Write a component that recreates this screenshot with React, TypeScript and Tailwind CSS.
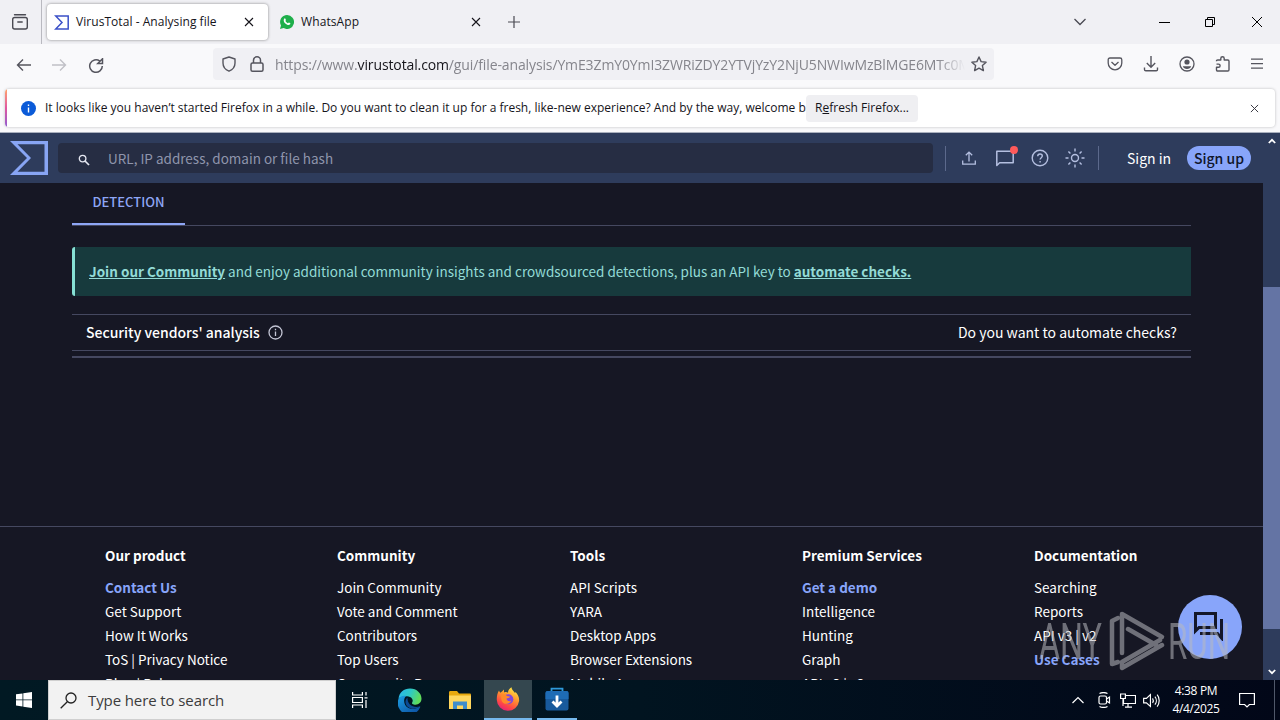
import React from "react";

type IconProps = { className?: string; children: React.ReactNode; box?: number; sw?: number };

function Icon({ className = "", children, box = 16, sw = 1.2 }: IconProps) {
  return (
    <svg
      viewBox={`0 0 ${box} ${box}`}
      fill="none"
      stroke="currentColor"
      strokeWidth={sw}
      className={`shrink-0 ${className}`}
    >
      {children}
    </svg>
  );
}

function Cross({ className = "" }: { className?: string }) {
  return (
    <Icon box={10} sw={1.1} className={className}>
      <path d="M1 1l8 8M9 1l-8 8" />
    </Icon>
  );
}

function TabBar() {
  return (
    <div className="flex h-11 items-center bg-[#f0f0f4]">
      <div className="flex h-full w-[42px] items-center border-r border-[#b9b9c0] pl-[11px] text-[#4a4a52]">
        <Icon className="h-[18px] w-[18px]" box={18} sw={1.4}>
          <path d="M3.5 1.7h11" strokeLinecap="round" />
          <path d="M1.7 6.5c0-1.300.7-2 2-2h10.600c1.300 0 2 .7 2 2v7.500c0 1.300-.7 2-2 2H3.700c-1.300 0-2-.7-2-2zM6.800 9h4.400" strokeLinecap="round" />
        </Icon>
      </div>
      <div className="ml-[5px] flex h-9 w-[221px] items-center rounded bg-white shadow-[0_0_3px_rgba(0,0,0,0.45)]">
        <svg viewBox="0 0 15 15" className="ml-[7px] h-[15px] w-[15px]" fill="none" stroke="#3b50c8" strokeWidth="1.500">
          <path d="M1.700 1h12.500v13H1.700L8 7.500z" />
        </svg>
        <span className="ml-[7px] w-[160px] text-[12px] whitespace-nowrap tracking-[0.05px] text-[#15141a]">VirusTotal - Analysing file</span>
        <Cross className="ml-[8px] h-[10px] w-[10px] text-[#15141a]" />
      </div>
      <svg viewBox="0 0 14 14" className="ml-3 h-[14px] w-[14px]">
        <path d="M7 0a7 7 0 1 1-3.400 13.100L0 14l1-3.500A7 7 0 0 1 7 0z" fill="#1faf4b" />
        <path d="M4.500 3.400c.5-.3.8 0 1 .6l.4 1c.1.4-.5.8-.5 1 .5 1 1.300 1.700 2.400 2.200.3 0 .6-.8 1-.8l1.300.7c.5.3.2 1.100-.3 1.500-1 .9-2.700.2-4.100-.9C4 7.400 2.900 4.900 4.500 3.400z" fill="#fff" />
      </svg>
      <span className="ml-[7px] w-[160px] text-[12px] tracking-[0.1px] text-[#15141a]">WhatsApp</span>
      <Cross className="ml-[10px] h-[10px] w-[10px] text-[#15141a]" />
      <Icon className="ml-[27px] h-3 w-3 text-[#4a4a52]" box={12} sw={1.2}>
        <path d="M6 0v12M0 6h12" />
      </Icon>
      <div className="ml-auto flex items-center pr-[18px] text-black">
        <Icon className="mr-[73px] h-3 w-3 text-[#4a4a52]" box={12} sw={1.3}>
          <path d="M.5 3L6 8.500 11.500 3" />
        </Icon>
        <Icon className="mr-[35px] h-[11px] w-[11px]" box={11} sw={1}>
          <path d="M0 5.500h11" />
        </Icon>
        <Icon className="mr-[36px] h-[11px] w-[11px]" box={11} sw={1}>
          <path d="M.5 2.500h7v7h-7zM2.500 2.500v-2h7v7h-2" />
        </Icon>
        <Icon className="h-[10px] w-[10px]" box={10} sw={1}>
          <path d="M0 0l10 10M10 0L0 10" />
        </Icon>
      </div>
    </div>
  );
}

function NavBar() {
  return (
    <div className="flex h-11 items-center bg-[#f9f9fb] pr-[17px] pl-[16px] text-[#55555e]">
      <Icon className="h-4 w-4" sw={1.4}>
        <path d="M15 7H1.500M7 1.500L1.500 7 7 12.500" />
      </Icon>
      <Icon className="ml-[19px] h-4 w-4 text-[#c0c0c6]" sw={1.4}>
        <path d="M1 7h13.500M9 1.500L14.500 7 9 12.500" />
      </Icon>
      <Icon className="ml-[21px] h-4 w-4" sw={1.5}>
        <path d="M14.300 8A6.300 6.300 0 1 1 11.800 3M14.500.800v4.700H9.800z" />
      </Icon>
      <div className="-mt-1 ml-[109px] flex h-8 w-[781px] items-center self-center rounded bg-[#f0f0f4]">
        <Icon className="ml-2 h-4 w-4" sw={1.4}>
          <path d="M8 1l6 2v4c0 4-2.500 6.800-6 8.200C4.500 13.800 2 11 2 7V3z" strokeLinejoin="round" />
        </Icon>
        <Icon className="ml-3 h-4 w-4" sw={1.5}>
          <rect x="2" y="7" width="12" height="8.200" rx="1.500" />
          <path d="M4.500 7V4.300a3.500 3.500 0 0 1 7 0V7" />
        </Icon>
        <div className="ml-[10px] w-[690px] overflow-hidden text-[14px] whitespace-nowrap text-[#85858c] [mask-image:linear-gradient(to_right,black_96%,transparent)]">
          <span className="tracking-[-0.12px]">https://www.</span>
          <span className="tracking-[-0.12px] text-[#15141a]">virustotal.com</span>
          <span className="tracking-[-0.12px]">/gui/file-analysis/YmE3ZmY0YmI3ZWRiZDY2YTVjYzY2NjU5NWIwMzBlMGE6MTc0Mzc4</span>
        </div>
        <Icon className="ml-[6px] h-4 w-4" sw={1.4}>
          <path d="M8 1l2.100 4.600 5 .6-3.700 3.400 1 5L8 12.100l-4.400 2.500 1-5L.900 6.200l5-.6z" strokeLinejoin="round" />
        </Icon>
      </div>
      <div className="-mt-1 ml-auto flex items-center">
        <Icon className="mr-[20px] h-4 w-4" sw={1.3}>
          <path d="M3 2h10c1.200 0 1.800.7 1.800 1.800V7a6.800 6.800 0 0 1-13.600 0V3.800C1.200 2.700 1.800 2 3 2zM4.500 6L8 9.200 11.500 6" strokeLinejoin="round" />
        </Icon>
        <Icon className="mr-[20px] h-4 w-4" sw={1.4}>
          <path d="M8 0v11M3.800 7L8 11.200 12.200 7M1.500 11.500v2c0 .8.500 1.300 1.300 1.300h10.400c.8 0 1.300-.5 1.300-1.300v-2" />
        </Icon>
        <Icon className="mr-[20px] h-4 w-4" sw={1.3}>
          <circle cx="8" cy="8" r="7" />
          <circle cx="8" cy="6" r="2.600" fill="currentColor" stroke="none" />
          <path d="M3.800 10.300h8.400c-.6 1.800-2.200 2.700-4.200 2.700s-3.600-.9-4.200-2.700z" fill="currentColor" stroke="none" />
        </Icon>
        <Icon className="mr-[20px] h-4 w-4" sw={1.4}>
          <path d="M1.500 5.200c0-.8.400-1.200 1.200-1.200h3.100V2.400a1.700 1.700 0 0 1 3.400 0V4h3.600c.8 0 1.200.4 1.200 1.200v8.600c0 .8-.4 1.200-1.200 1.200H2.700c-.8 0-1.200-.4-1.200-1.200v-2.500h2a1.600 1.600 0 0 0 0-3.200h-2" strokeLinejoin="round" />
        </Icon>
        <Icon className="h-3 w-3" box={12} sw={1.3}>
          <path d="M0 1.200h12M0 5.700h12M0 10.200h12" />
        </Icon>
      </div>
    </div>
  );
}

function Notice() {
  return (
    <div className="flex h-[45px] items-start border-b border-[#aab0be] bg-[#f9f9fb] px-[5px] pt-px">
      <div className="flex h-[38px] w-full items-center overflow-hidden rounded bg-white shadow-[0_0_3px_rgba(0,0,0,0.25)]">
        <div className="h-full w-[2px] bg-linear-to-b from-[#ffa266] via-[#e0559f] to-[#9059cf]" />
        <svg viewBox="0 0 15 15" className="ml-[14px] h-[15px] w-[15px]">
          <circle cx="7.500" cy="7.500" r="7.500" fill="#0b5bd8" />
          <path d="M7.500 6.500v5M7.500 3.500v1.600" stroke="#fff" strokeWidth="1.400" />
        </svg>
        <span className="ml-[9px] w-[761px] text-[12px] whitespace-nowrap text-[#15141a]">
          It looks like you haven’t started Firefox in a while. Do you want to clean it up for a fresh, like-new experience? And by the way, welcome back!
        </span>
        <button className="flex h-[27px] w-[112px] items-center justify-center rounded bg-[#efeff2] text-[12px] whitespace-nowrap text-[#15141a]">
          R<span className="underline">e</span>fresh Firefox...
        </button>
        <Cross className="mr-[16px] ml-auto h-[9px] w-[9px] text-[#3a3a42]" />
      </div>
    </div>
  );
}

function SiteHeader() {
  return (
    <header className="flex h-[50px] items-center bg-[#2e3c5c] pl-[10px] text-[#b4bfe0]">
      <svg viewBox="0 0 38 34" className="h-[34px] w-[38px]">
        <path d="M0 0h38v34H0l17-17zM7.500 3.300L21 17 7.500 30.700h27V3.300z" fill="#88a5f4" fillRule="evenodd" />
      </svg>
      <div className="ml-[10px] flex h-[30px] w-[875px] items-center rounded bg-[#262d43]">
        <Icon className="ml-[20px] mt-[3px] h-3 w-3 text-[#e4e6f0]" box={12} sw={1.3}>
          <circle cx="4.600" cy="4.600" r="3.300" />
          <path d="M7 7l4 4" strokeWidth="1.700" />
        </Icon>
        <span className="ml-[18px] text-[13.5px] text-[#8f95ac]">URL, IP address, domain or file hash</span>
      </div>
      <div className="ml-3 h-[25px] w-px bg-[#5c698c]" />
      <Icon className="ml-[16px] h-[14px] w-[14px]" box={14} sw={1.3}>
        <path d="M7 10.500V1.200M3.800 4.300L7 1.100l3.200 3.200M.700 9.500v3.700h12.600V9.500" />
      </Icon>
      <div className="relative ml-[20px] h-[18px] w-[18px]">
        <Icon className="h-[18px] w-[18px]" box={18} sw={1.5}>
          <path d="M.800 16.500V2.300h16.400v11.400H3.600z" strokeLinejoin="round" />
        </Icon>
        <span className="absolute -top-[3px] left-[14px] h-[8px] w-[8px] rounded-full bg-[#ff5a5a]" />
      </div>
      <Icon className="ml-[17px] h-[18px] w-[18px]" box={18} sw={1.4}>
        <circle cx="9" cy="9" r="7.800" />
        <path d="M6.700 7.300c0-1.400 1-2.300 2.300-2.300s2.300.9 2.300 2.100c0 1.600-2.200 1.700-2.200 3.500M9.100 12v1.500" />
      </Icon>
      <Icon className="ml-[16px] h-5 w-5" box={20} sw={1.4}>
        <circle cx="10" cy="10" r="3.500" />
        <path d="M10 .500v3M10 16.500v3M.500 10h3M16.500 10h3M3.400 3.400l2 2M14.600 14.600l2 2M3.400 16.600l2-2M14.600 5.400l2-2" />
      </Icon>
      <div className="ml-[13px] h-6 w-px bg-[#5c698c]" />
      <span className="ml-[28px] w-[60px] text-[14px] whitespace-nowrap text-white">Sign in</span>
      <span className="flex h-6 w-16 items-center justify-center rounded-full bg-[#88a5fa] text-[14px] font-medium whitespace-nowrap text-[#10162c]">Sign up</span>
    </header>
  );
}

type Column = { title: string; left: string; links: { text: string; accent?: boolean }[] };

const columns: Column[] = [
  { title: "Our product", left: "w-[232px]", links: [{ text: "Contact Us", accent: true }, { text: "Get Support" }, { text: "How It Works" }, { text: "ToS | Privacy Notice" }, { text: "Blog | Releases" }] },
  { title: "Community", left: "w-[233px]", links: [{ text: "Join Community" }, { text: "Vote and Comment" }, { text: "Contributors" }, { text: "Top Users" }, { text: "Community Buzz" }] },
  { title: "Tools", left: "w-[232px]", links: [{ text: "API Scripts" }, { text: "YARA" }, { text: "Desktop Apps" }, { text: "Browser Extensions" }, { text: "Mobile App" }] },
  { title: "Premium Services", left: "w-[232px]", links: [{ text: "Get a demo", accent: true }, { text: "Intelligence" }, { text: "Hunting" }, { text: "Graph" }, { text: "API v3 | v2" }] },
  { title: "Documentation", left: "w-[200px]", links: [{ text: "Searching" }, { text: "Reports" }, { text: "API v3 | v2" }, { text: "Use Cases", accent: true }] },
];

function Page() {
  return (
    <div className="flex min-w-0 flex-1 flex-col bg-[#161724] text-white">
      <SiteHeader />
      <main className="flex h-[343px] flex-col pr-[72px] pl-[72px]">
        <div className="flex h-[43px] border-b border-[#454860]">
          <div className="flex h-[42px] w-[113px] items-start justify-center border-b-2 border-[#8ea6f5] pt-[7px] text-[13px] leading-[24px] font-medium text-[#8ea6f5]">DETECTION</div>
        </div>
        <div className="mt-[21px] flex h-[49px] items-center rounded-l-[3px] border-l-[3px] border-[#86e0d4] bg-[#173a3d] pl-[14px] text-[13.5px] whitespace-pre text-[#93dbd6]">
          <b className="underline">Join our Community</b>
          <span> and enjoy additional community insights and crowdsourced detections, plus an API key to </span>
          <b className="underline">automate checks.</b>
        </div>
        <div className="mt-[18px] flex h-[37px] items-center border-y border-[#454860] px-[14px] text-[14px]">
          <span className="font-medium">Security vendors' analysis</span>
          <Icon className="ml-[8px] h-[15px] w-[15px] text-[#c3c5d4]" box={15} sw={1.3}>
            <circle cx="7.500" cy="7.500" r="6.500" />
            <path d="M7.500 6.500v4.500M7.500 3.800v1.500" />
          </Icon>
          <span className="ml-auto">Do you want to automate checks?</span>
        </div>
        <div className="mt-[5px] h-[2px] bg-[#454860]" />
      </main>
      <footer className="flex h-[154px] overflow-hidden border-t border-[#454860] pt-[16px] pl-[105px] text-[13.5px] leading-[24px] whitespace-nowrap">
        {columns.map((c) => (
          <div key={c.title} className={`shrink-0 ${c.left}`}>
            <div className="mb-2 font-bold">{c.title}</div>
            {c.links.map((l) => (
              <div key={l.text} className={l.accent ? "font-bold text-[#88a5fa]" : ""}>{l.text}</div>
            ))}
          </div>
        ))}
      </footer>
    </div>
  );
}

function ScrollBar() {
  return (
    <div className="flex w-[17px] flex-col items-center bg-[#2e3c5c] text-white">
      <Icon className="mt-[4px] h-[8px] w-[10px]" box={10} sw={2.2}>
        <path d="M1 7.500l4-4 4 4" />
      </Icon>
      <div className="mt-[142px] h-[342px] w-full bg-[#6474a4]" />
      <Icon className="mt-[39px] h-[8px] w-[10px]" box={10} sw={2.2}>
        <path d="M1 2.500l4 4 4-4" />
      </Icon>
    </div>
  );
}

function ChatButton() {
  return (
    <div className="absolute top-[595px] left-[1178px] flex h-16 w-16 items-center justify-center rounded-full bg-[#88a5fa]">
      <svg viewBox="0 0 32 30" className="-mt-[2px] -ml-[2px] h-[30px] w-8" fill="none" stroke="#141728" strokeWidth="3">
        <path d="M2.500 2.500h20v14H6l-3.500 3.500z" />
        <path d="M28.500 8v19l-4-4.500H7" />
      </svg>
    </div>
  );
}

function Watermark() {
  return (
    <svg viewBox="0 0 200 70" className="absolute top-[605px] left-[1036px] h-[70px] w-[200px] opacity-55" fill="#b9babf">
      <text x="3" y="54" fontFamily="Roboto" fontSize="50" textLength="63" lengthAdjust="spacingAndGlyphs">ANY</text>
      <text x="132" y="54" fontFamily="Roboto" fontSize="50" textLength="62" lengthAdjust="spacingAndGlyphs">RUN</text>
      <g fill="none" stroke="#b9babf" strokeWidth="4.500" strokeLinecap="round" strokeLinejoin="round">
        <path d="M82 13l-6 3v43l6-2" />
        <path d="M86 48V9l40 23" />
        <path d="M92 24l28 16M126 40L86 63v-6l38-22" />
      </g>
    </svg>
  );
}

function Taskbar() {
  return (
    <div className="flex h-10 items-center bg-linear-to-r from-[#011923] via-[#011420] to-[#020718] text-white">
      <div className="flex w-12 justify-center">
        <svg viewBox="0 0 16 16" className="h-4 w-4" fill="#fff">
          <path d="M0 2.300L6.500 1.400v6.100H0zM7.300 1.300L16 0v7.500H7.300zM0 8.300h6.500v6.200L0 13.600zM7.300 8.300H16V16l-8.700-1.300z" />
        </svg>
      </div>
      <div className="flex h-full w-[288px] items-center border border-[#cfcfcf] bg-[#f2f2f2] pl-[11px]">
        <Icon className="h-[17px] w-[17px] text-[#222]" box={17} sw={1.3}>
          <circle cx="11" cy="6" r="5" />
          <path d="M7.300 9.700L.700 16.300" />
        </Icon>
        <span className="ml-[11px] text-[15px] tracking-[-0.1px] text-[#3c3c3c]">Type here to search</span>
      </div>
      <div className="flex w-12 justify-center">
        <Icon className="h-4 w-4" sw={1.2}>
          <path d="M.600 0v3h9.800V0M.600 5.500h9.800v5H.600zM.600 16v-3h9.800v3M14 0v3.500M14 8v8M12.500 5.800h3" />
        </Icon>
      </div>
      <div className="flex w-[52px] justify-center">
        <svg viewBox="0 0 24 24" className="h-6 w-6">
          <defs>
            <linearGradient id="eg" x1="0" y1="0" x2="1" y2="0.300">
              <stop offset="0" stopColor="#29b6f0" />
              <stop offset="0.550" stopColor="#2fc9c4" />
              <stop offset="1" stopColor="#5fdc5c" />
            </linearGradient>
            <linearGradient id="eb" x1="0" y1="0" x2="0.800" y2="1">
              <stop offset="0" stopColor="#1da0e4" />
              <stop offset="1" stopColor="#0c4fa0" />
            </linearGradient>
          </defs>
          <path d="M.500 11C1 4.500 6 .5 12 .5c7 0 11.500 5 11.500 10 0 4-3 6.200-6 6.200-2.500 0-4.200-1-3.200-2.500 1.500-2.200-.8-6-5.300-6C4.500 8.200 1.500 9 .500 11z" fill="url(#eg)" />
          <path d="M.500 11C2 8.500 5 7.500 8 7.900c-3.200 3-2.200 10 2.500 12.100 4 1.700 8.200.7 11-1.500.5-.3 1 0 .6.700A11.500 11.500 0 0 1 .500 11z" fill="url(#eb)" />
          <path d="M9.500 9.500c-3.500 3-2.300 9 2.700 10.700 4 1.200 7.200.2 9.500-1.700-6.500 1.800-12.700-2-12.200-9z" fill="#0b4a94" />
        </svg>
      </div>
      <div className="flex w-[48px] justify-center">
        <svg viewBox="0 0 22 19" className="h-[19px] w-[22px]">
          <path d="M0 1.500C0 .7.500 0 1.300 0H8l2 2.500h10.700c.8 0 1.300.5 1.300 1.200V18H0z" fill="#e8a90e" />
          <path d="M0 4.500h22V18H0z" fill="#ffd75e" />
          <path d="M4 18v-7.500h14V18h-4v-3.500H8V18z" fill="#3f8dcb" />
        </svg>
      </div>
      <div className="flex h-full w-12 flex-col items-center bg-[#34474f]">
        <svg viewBox="0 0 24 24" className="mt-[7px] h-6 w-6">
          <defs>
            <linearGradient id="ff" x1="0.800" y1="0" x2="0.300" y2="1">
              <stop offset="0" stopColor="#fff04a" />
              <stop offset="0.400" stopColor="#ff9a2e" />
              <stop offset="0.750" stopColor="#ff4a44" />
              <stop offset="1" stopColor="#e52079" />
            </linearGradient>
          </defs>
          <path d="M3 3.500c.3 1 .8 1.700 1.300 2.200L6 4.500l2-2v3c2-.7 3-.4 4 .3C12 3.300 13.500 1.300 15.500.3c.2 2.500 2 3.500 3.500 5.700l.5-1c2.500 2.500 3.900 5.500 3.600 9A11.200 11.200 0 0 1 .800 13C.600 9 1.500 6 3 3.500z" fill="url(#ff)" />
          <circle cx="12.300" cy="12.300" r="5" fill="#8047dc" />
          <path d="M4.500 8.500c2.500-2 5-1.500 6.500.5l3 .5c-.5 1.500-2 1.800-3.500 2 .3 2.500 3 3.500 5 2-2 4-7.500 4.500-9.500 1C5 12.500 5.500 10 4.500 8.500z" fill="#ff8a2b" />
        </svg>
        <div className="mt-auto h-[2px] w-full bg-[#76b9ed]" />
      </div>
      <div className="ml-[5px] flex h-full w-10 flex-col items-center">
        <svg viewBox="0 0 24 24" className="mt-[7px] h-6 w-6">
          <path d="M6.500 5V1.600h11V5" fill="none" stroke="#2f9adb" strokeWidth="1.800" />
          <rect x=".5" y="4" width="23" height="19.500" rx="2" fill="#185a9c" />
          <path d="M.5 6a2 2 0 0 1 2-2h19a2 2 0 0 1 2 2v6H.5z" fill="#1e6cb5" />
          <path d="M12 8.500v10M7.500 14.500l4.500 4.500 4.500-4.500" fill="none" stroke="#fff" strokeWidth="2.800" />
        </svg>
        <div className="mt-auto h-[2px] w-full bg-[#76b9ed]" />
      </div>
      <div className="ml-auto flex h-full items-center">
        <Icon className="h-3 w-3" box={12} sw={1.2}>
          <path d="M.500 9L6 3.500 11.500 9" />
        </Icon>
        <Icon className="ml-[12px] h-4 w-4" sw={1.2}>
          <rect x="3" y="4" width="7.500" height="8" rx="1.500" />
          <path d="M10.500 7l3-2v6l-3-2M3.500 1.500C6 .300 9 .300 11.500 1.500M3.500 14.500c2.500 1.200 5.500 1.200 8 0" />
        </Icon>
        <Icon className="ml-[8px] h-4 w-4" sw={1.2}>
          <path d="M5.500 3.500h10v8H3.500V7M8 11.500V15M5 15.200h7M.600 2h4.800v4.500H.600zM3 6.500V14" />
        </Icon>
        <Icon className="ml-[7px] h-[17px] w-[17px]" sw={1.1}>
          <path d="M.600 6v4.200h2.600L7 13.500v-11L3.200 6zM9 6c.8 1.200.8 3 0 4.200M11.200 4.300c1.800 2.200 1.800 5.500 0 7.600M13.300 2.500c2.600 3 2.600 8 0 11.200" />
        </Icon>
        <div className="ml-[12px] flex w-12 flex-col items-center text-[12px] leading-[18px] tracking-[-0.35px] whitespace-nowrap">
          <span>4:38 PM</span>
          <span>4/4/2025</span>
        </div>
        <Icon className="ml-[19px] h-4 w-4" sw={1.2}>
          <path d="M.600 1.500h14.800v11h-5L8 15l-2.400-2.500h-5z" />
        </Icon>
        <div className="ml-[19px] h-full w-px bg-[#50586a]" />
        <div className="w-[5px]" />
      </div>
    </div>
  );
}

export default function App() {
  return (
    <div className="relative flex h-[720px] w-[1280px] flex-col overflow-hidden bg-[#161724] font-['Open_Sans','Noto_Sans',sans-serif]">
      <TabBar />
      <NavBar />
      <Notice />
      <div className="flex h-[547px] font-['Noto_Sans_CJK_SC',sans-serif]">
        <Page />
        <ScrollBar />
      </div>
      <Taskbar />
      <ChatButton />
      <Watermark />
    </div>
  );
}
